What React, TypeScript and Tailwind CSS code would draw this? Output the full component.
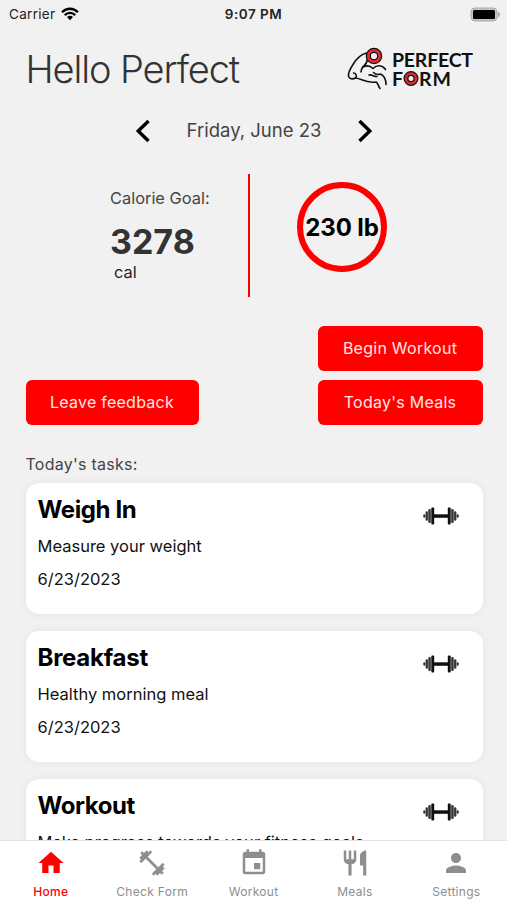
import type { ReactNode } from "react";
import { MdEvent, MdHome, MdPerson, MdRestaurant } from "react-icons/md";

const tasks = [
  { title: "Weigh In", description: "Measure your weight", date: "6/23/2023", spacing: "tracking-[-0.4px]" },
  { title: "Breakfast", description: "Healthy morning meal", date: "6/23/2023", spacing: "tracking-[-0.25px]" },
  { title: "Workout", description: "Make progress towards your fitness goals", date: "6/23/2023", spacing: "tracking-[-0.45px]" },
];

function StatusBar() {
  return (
    <div className="flex h-7 shrink-0 items-center px-[9px] text-[13.5px] text-[#222]">
      <div className="flex flex-1 items-center gap-[6px]">
        <span className="tracking-[0.3px]">Carrier</span>
        <svg width="18" height="14" viewBox="0 0 18 14" fill="none" stroke="#000" strokeWidth="2.3">
          <path d="M1 5.2C5.6 0.6 12.4 0.6 17 5.2" />
          <path d="M3.7 8.2C6.8 5.2 11.2 5.2 14.3 8.2" />
          <path d="M6 9.9C7.8 8.4 10.2 8.4 12 9.9L9 13.2Z" fill="#000" stroke="none" />
        </svg>
      </div>
      <span className="font-semibold tracking-[0.5px]">9:07 PM</span>
      <div className="flex flex-1 justify-end">
        <svg width="31" height="15" viewBox="0 0 31 15" className="-mr-[3px]">
          <rect x="1" y="1" width="26" height="13" rx="4" fill="#c4c4c4" stroke="#aaa" strokeWidth="1" />
          <rect x="3" y="3" width="22" height="9" rx="1.5" fill="#000" />
          <path d="M28 4.500v6c2.500-1 2.500-5 0-6Z" fill="#aaa" />
        </svg>
      </div>
    </div>
  );
}

function Logo() {
  return (
    <svg width="128" height="46" viewBox="0 0 128 46" fill="none" className="-mt-[3px]">
      <g stroke="#111" strokeWidth="1.6" strokeLinecap="round" strokeLinejoin="round">
        <path d="M19.500 8C13 9.500 9 14.500 6 19.500C3 24 1 28 1.500 31.500C3 34.500 6 34.500 9 32.500C10 30 8.500 28 6.500 28" />
        <path d="M9 33C15 34 19 38.500 29 37C31.500 38.500 31 41 33 43.500" />
        <path d="M20 15C20.500 18.500 17.500 20 15.500 22.500C14.500 24 14 25.500 14 27" />
        <path d="M16 22C20 20 23 20.500 26 23.500C30 19.500 35.500 20 38.500 24.500" />
        <path d="M22 30C25 29 27 32 30 31.500M26.500 27.500C28 29 31 30 33.500 29C38 31 39 35 39 39.500" />
      </g>
      <circle cx="27" cy="11" r="5.700" stroke="#111" strokeWidth="5.200" />
      <circle cx="27" cy="11" r="5.700" stroke="#df2b32" strokeWidth="2.800" />
      <g fill="#111" fontFamily="Lato" fontSize="19.500" fontWeight="700">
        <text x="45" y="21.500" textLength="81" lengthAdjust="spacing">PERFECT</text>
        <text x="45" y="40.500">F</text>
        <text x="72" y="40.500" textLength="32">RM</text>
      </g>
      <circle cx="64" cy="33.500" r="5" stroke="#111" strokeWidth="5" />
      <circle cx="64" cy="33.500" r="5" stroke="#df2b32" strokeWidth="2.500" />
    </svg>
  );
}

function Chevron({ flip }: { flip?: boolean }) {
  return (
    <svg width="16" height="24" viewBox="0 0 16 24" fill="none" stroke="#000" strokeWidth="3.4" className={flip ? "-scale-x-100" : ""}>
      <path d="M13.500 2L3.200 12L13.500 22" />
    </svg>
  );
}

function Barbell() {
  return (
    <svg width="36" height="18" viewBox="0 0 36 18" fill="#111">
      <rect x="11" y="7.300" width="14" height="3.500" />
      <rect x="8.300" y="0.500" width="2.900" height="17" rx="1" />
      <rect x="24.800" y="0.500" width="2.900" height="17" rx="1" />
      <g fill="#333">
        <rect x="5.300" y="2" width="2.500" height="14" rx="1" />
        <rect x="2.600" y="4.300" width="2.300" height="9.400" rx="1" />
        <rect x="0.300" y="7.300" width="2" height="3.400" rx="1" />
        <rect x="28.200" y="2" width="2.500" height="14" rx="1" />
        <rect x="31.100" y="4.300" width="2.300" height="9.400" rx="1" />
        <rect x="33.700" y="7.300" width="2" height="3.400" rx="1" />
      </g>
    </svg>
  );
}

function DumbbellIcon() {
  return (
    <svg width="30" height="30" viewBox="0 0 24 24" fill="currentColor" stroke="currentColor" strokeWidth="0.3">
      <path d="M20.570 14.860L22 13.430 20.570 12 17 15.570 8.430 7 12 3.430 10.570 2 9.140 3.430 7.710 2 5.570 4.140 4.140 2.710 2.710 4.140l1.430 1.430L2 7.710l1.430 1.430L2 10.570 3.430 12 7 8.430 15.570 17 12 20.570 13.430 22l1.430-1.430L16.290 22l2.140-2.140 1.430 1.430 1.430-1.430-1.430-1.430L22 16.290z" />
    </svg>
  );
}

function RedButton({ children, className }: { children: ReactNode; className: string }) {
  return (
    <button className={`h-[45px] rounded-[6px] bg-[#ff0000] text-[16px] tracking-[0.25px] text-[#ffe5e5] ${className}`}>
      {children}
    </button>
  );
}

function TaskCard({ title, description, date, spacing }: (typeof tasks)[number]) {
  return (
    <div className="flex h-[131px] shrink-0 items-start justify-between rounded-[13px] bg-white pr-6 pl-3 shadow-[0_0_10px_rgba(0,0,0,0.06)]">
      <div className="text-[16.5px] text-[#111]">
        <h2 className={`mt-[11px] text-[24px] leading-8 font-bold text-black ${spacing}`}>{title}</h2>
        <p className="mt-2 leading-6">{description}</p>
        <p className="mt-[9px] leading-6">{date}</p>
      </div>
      <div className="mt-6">
        <Barbell />
      </div>
    </div>
  );
}

function Tab({ icon, label, active }: { icon: ReactNode; label: string; active?: boolean }) {
  return (
    <div className={`flex flex-1 flex-col items-center pt-[7px] ${active ? "font-medium text-[#ff0000]" : "text-[#8e8e8e]"}`}>
      {icon}
      <span className="mt-[6px] text-[12px] leading-4 tracking-[0.3px]">{label}</span>
    </div>
  );
}

export default function App() {
  return (
    <div className="flex h-[900px] w-[507px] flex-col overflow-hidden bg-[#f1f1f1] font-['Inter',sans-serif]">
      <StatusBar />
      <main className="flex min-h-0 flex-1 flex-col overflow-hidden pr-[24.5px] pl-[25.5px]">
        <header className="flex h-[82px] shrink-0 items-center justify-between pr-[8px]">
          <h1 className="text-[38px] font-light tracking-[-1.1px] text-[#333]">Hello Perfect</h1>
          <Logo />
        </header>

        <div className="flex h-[41px] shrink-0 items-center justify-center gap-[36px] text-[18.5px] text-[#444]">
          <Chevron />
          <span>Friday, June 23</span>
          <Chevron flip />
        </div>

        <section className="mt-[23px] flex h-[123px] shrink-0">
          <div className="w-[222px] pt-3 pl-[84.5px] text-[#333]">
            <p className="text-[16.4px] leading-6 text-[#444]">Calorie Goal:</p>
            <p className="mt-[11px] text-[34px] leading-[42px] font-bold">3278</p>
            <p className="mt-[-3px] pl-1 text-[16.4px] leading-6 text-[#222]">cal</p>
          </div>
          <div className="w-[2.5px] bg-[#ff0000]" />
          <div className="mt-[8px] ml-[47px] flex size-[90px] items-center justify-center rounded-full border-[6px] border-[#ff0000] pt-px text-[24px] font-bold tracking-[-0.1px] whitespace-nowrap text-black">
            230 lb
          </div>
        </section>

        <section className="mt-[28.5px] flex shrink-0 items-end justify-between">
          <RedButton className="w-[173px]">Leave feedback</RedButton>
          <div className="flex flex-col gap-[9px]">
            <RedButton className="w-[165px]">Begin Workout</RedButton>
            <RedButton className="w-[165px]">Today's Meals</RedButton>
          </div>
        </section>

        <p className="mt-[27.5px] text-[16px] leading-6 tracking-[0.25px] text-[#444]">Today's tasks:</p>
        <div className="mt-[7px] flex flex-col gap-[17px]">
          {tasks.map((task) => (
            <TaskCard key={task.title} {...task} />
          ))}
        </div>
      </main>

      <nav className="z-10 flex h-[60px] shrink-0 border-t border-[#e3e3e3] bg-white">
        <Tab icon={<MdHome size={30} />} label="Home" active />
        <Tab icon={<DumbbellIcon />} label="Check Form" />
        <Tab icon={<MdEvent size={30} />} label="Workout" />
        <Tab icon={<MdRestaurant size={30} />} label="Meals" />
        <Tab icon={<MdPerson size={30} />} label="Settings" />
      </nav>
    </div>
  );
}
